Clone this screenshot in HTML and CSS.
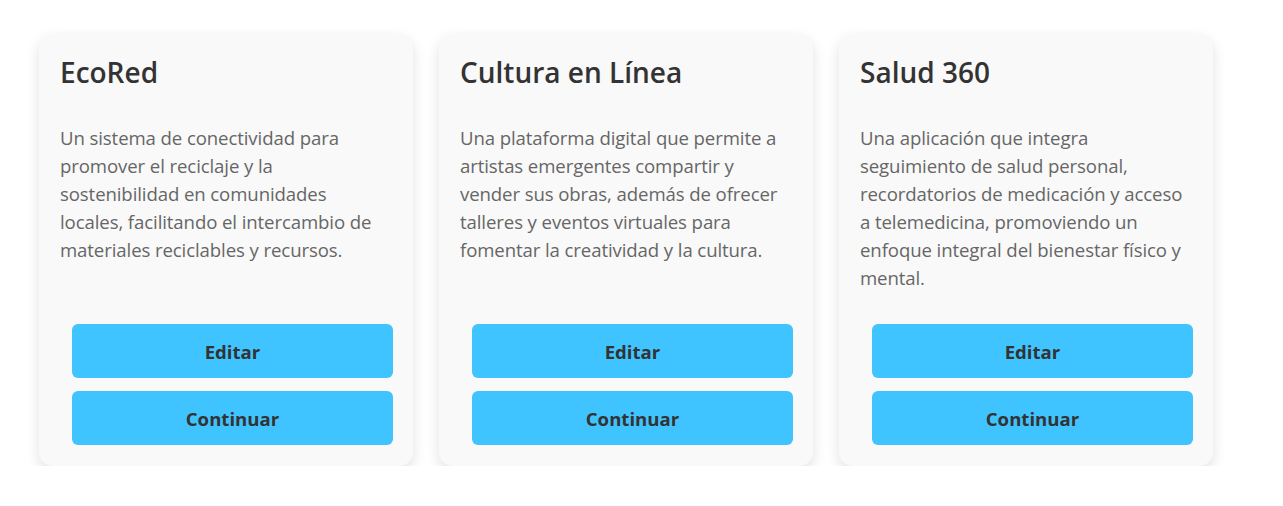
FILE: index.html
```html
<!DOCTYPE html>
<html lang="es">
<head>
<meta charset="utf-8">
<title>Proyectos</title>
<link rel="stylesheet" href="styles.css">
</head>
<body>
<main class="grid">
  <article class="card">
    <h2 class="card-title">EcoRed</h2>
    <p class="card-desc">Un sistema de conectividad para promover el reciclaje y la sostenibilidad en comunidades locales, facilitando el intercambio de materiales reciclables y recursos.</p>
    <div class="actions">
      <button class="btn">Editar</button>
      <button class="btn">Continuar</button>
    </div>
  </article>
  <article class="card">
    <h2 class="card-title">Cultura en Línea</h2>
    <p class="card-desc">Una plataforma digital que permite a artistas emergentes compartir y vender sus obras, además de ofrecer talleres y eventos virtuales para fomentar la creatividad y la cultura.</p>
    <div class="actions">
      <button class="btn">Editar</button>
      <button class="btn">Continuar</button>
    </div>
  </article>
  <article class="card">
    <h2 class="card-title">Salud 360</h2>
    <p class="card-desc">Una aplicación que integra seguimiento de salud personal, recordatorios de medicación y acceso a telemedicina, promoviendo un enfoque integral del bienestar físico y mental.</p>
    <div class="actions">
      <button class="btn">Editar</button>
      <button class="btn">Continuar</button>
    </div>
  </article>
</main>
</body>
</html>
```
FILE: styles.css
```css
* { box-sizing: border-box; }
body {
  margin: 0;
  background: #ffffff;
  font-family: "Open Sans", "Noto Sans", sans-serif;
  color: #333;
}
.grid {
  display: grid;
  grid-template-columns: repeat(3, 374px);
  gap: 26px;
  padding: 34px 0 0 39px;
}
.card {
  background: #f9f9f9;
  border-radius: 14px;
  box-shadow: 0 5px 14px rgba(0, 0, 0, 0.12);
  padding: 20px 21px 21px 21px;
  display: flex;
  flex-direction: column;
  height: 432px;
}
.card-title {
  margin: 0;
  font-size: 28px;
  font-weight: 600;
  line-height: 36px;
  color: #333;
}
.card-desc {
  margin: 34px 0 0 0;
  font-size: 18.6px;
  line-height: 28px;
  letter-spacing: -0.1px;
  color: #666;
  flex: 1;
}
.actions {
  display: flex;
  flex-direction: column;
  gap: 13px;
  padding-left: 12px;
  margin-right: -1px;
}
.btn {
  height: 54px;
  border: none;
  border-radius: 6px;
  background: #40c4ff;
  color: #333;
  font-family: inherit;
  font-size: 18.6px;
  font-weight: 700;
  cursor: pointer;
}
```
